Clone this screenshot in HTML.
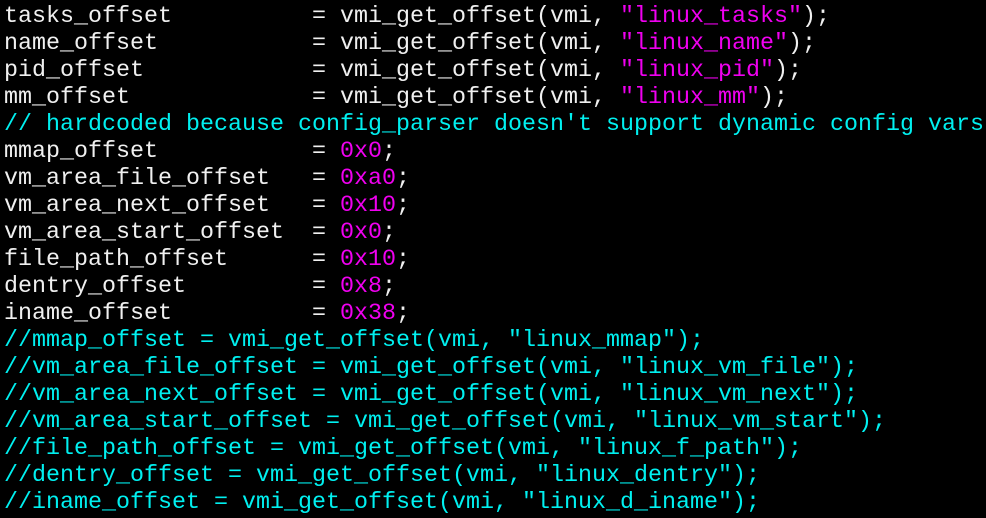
<!DOCTYPE html>
<html><head><style>
html,body{margin:0;padding:0;background:#000;width:986px;height:518px;overflow:hidden}
pre{margin:0;position:absolute;left:4px;top:4px;font-family:"Liberation Mono",monospace;font-size:23.33px;line-height:27px;color:#f0f0f0;white-space:pre}
.m{color:#f000f0}.c{color:#00f0f0}
</style></head><body><pre>tasks_offset          = vmi_get_offset(vmi, <span class="m">"linux_tasks"</span>);
name_offset           = vmi_get_offset(vmi, <span class="m">"linux_name"</span>);
pid_offset            = vmi_get_offset(vmi, <span class="m">"linux_pid"</span>);
mm_offset             = vmi_get_offset(vmi, <span class="m">"linux_mm"</span>);
<span class="c">// hardcoded because config_parser doesn't support dynamic config vars</span>
mmap_offset           = <span class="m">0x0</span>;
vm_area_file_offset   = <span class="m">0xa0</span>;
vm_area_next_offset   = <span class="m">0x10</span>;
vm_area_start_offset  = <span class="m">0x0</span>;
file_path_offset      = <span class="m">0x10</span>;
dentry_offset         = <span class="m">0x8</span>;
iname_offset          = <span class="m">0x38</span>;
<span class="c">//mmap_offset = vmi_get_offset(vmi, "linux_mmap");
//vm_area_file_offset = vmi_get_offset(vmi, "linux_vm_file");
//vm_area_next_offset = vmi_get_offset(vmi, "linux_vm_next");
//vm_area_start_offset = vmi_get_offset(vmi, "linux_vm_start");
//file_path_offset = vmi_get_offset(vmi, "linux_f_path");
//dentry_offset = vmi_get_offset(vmi, "linux_dentry");
//iname_offset = vmi_get_offset(vmi, "linux_d_iname");</span></pre></body></html>
